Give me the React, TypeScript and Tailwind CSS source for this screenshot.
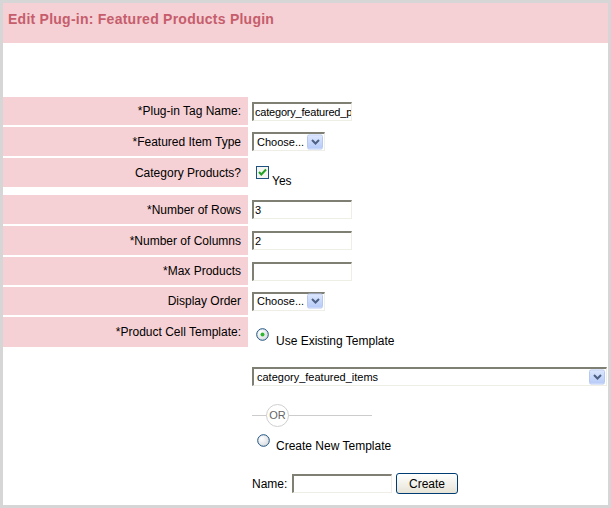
import React from 'react';

const font = { fontFamily: '"Liberation Sans", Arial, sans-serif' };

const Arrow = () => (
  <span className="pointer-events-none absolute right-[2px] top-1/2 flex h-[15px] w-[16px] -translate-y-1/2 items-center justify-center rounded-[2px] border border-[#b5c8f2] bg-gradient-to-b from-[#dce6fd] to-[#b7cbf8]">
    <svg width="9" height="7" viewBox="0 0 9 7">
      <path d="M1 1.5 L4.5 5 L8 1.5" fill="none" stroke="#4d6185" strokeWidth="2" />
    </svg>
  </span>
);

const XpSelect = ({ width, value }: { width: string; value: string }) => (
  <div className={`relative h-[19px] ${width}`}>
    <div className="flex h-full w-full items-center border border-t-2 border-l-2 border-t-[#7f7f74] border-l-[#7f7f74] border-r-[#eeeee6] border-b-[#eeeee6] bg-white pl-[3px] text-[11px] leading-[13px] text-black">
      {value}
    </div>
    <Arrow />
  </div>
);

const XpInput = ({ value = '', width = 'w-[100px]' }: { value?: string; width?: string }) => (
  <input
    type="text"
    defaultValue={value}
    className={`h-[19px] ${width} border border-t-2 border-l-2 border-t-[#7f7f74] border-l-[#7f7f74] border-r-[#eeeee6] border-b-[#eeeee6] bg-white py-0 pl-[1px] text-[11px] leading-[13px] tracking-[-0.2px] text-black outline-none`}
    style={font}
  />
);

const Radio = ({ checked }: { checked?: boolean }) => (
  <svg width="13" height="13" viewBox="0 0 13 13" className="shrink-0">
    <defs>
      <radialGradient id={checked ? 'rg1' : 'rg2'} cx="0.35" cy="0.35" r="0.7">
        <stop offset="0" stopColor="#ffffff" />
        <stop offset="1" stopColor="#d8dce0" />
      </radialGradient>
    </defs>
    <circle cx="6.5" cy="6.5" r="5.8" fill={`url(#${checked ? 'rg1' : 'rg2'})`} stroke="#1c5180" strokeWidth="1" />
    {checked && <circle cx="6.5" cy="6.5" r="2" fill="#2fb52f" />}
  </svg>
);

const Checkbox = () => (
  <svg width="13" height="13" viewBox="0 0 13 13" className="shrink-0">
    <rect x="0.5" y="0.5" width="12" height="12" fill="#f4f4f0" stroke="#1c5180" />
    <path d="M3 6 L5.3 8.5 L10 3.5" fill="none" stroke="#21a121" strokeWidth="2" />
  </svg>
);

const Label = ({ text, h }: { text: string; h: string }) => (
  <div className={`flex ${h} w-[245px] shrink-0 items-center justify-end bg-[#f5d0d4] pr-[7px] text-[12px] text-black`}>
    {text}
  </div>
);

export default function App() {
  return (
    <div className="h-[508px] w-[611px] bg-[#d6d6d6] pt-[3px] pl-[3px] pr-[3px] pb-[3px]" style={font}>
      <div className="h-[502px] w-[605px] bg-white">
        {/* Header */}
        <div className="h-[40px] bg-[#f5d0d4] pl-[5px] pt-[8px]">
          <h1 className="text-[14px] font-bold leading-[17px] tracking-[0.25px] text-[#c65d6c]">
            Edit Plug-in: Featured Products Plugin
          </h1>
        </div>

        <div className="mt-[54px] flex flex-col gap-[2px]">
          <div className="flex gap-[4px]">
            <Label text="*Plug-in Tag Name:" h="h-[28px]" />
            <div className="flex items-center">
              <XpInput value="category_featured_products" />
            </div>
          </div>
          <div className="flex gap-[4px]">
            <Label text="*Featured Item Type" h="h-[29px]" />
            <div className="flex items-center">
              <XpSelect width="w-[73px]" value="Choose..." />
            </div>
          </div>
          <div className="flex h-[35px] items-start gap-[4px]">
            <Label text="Category Products?" h="h-[29px]" />
            <div className="flex items-start pl-[4px] text-[12px]">
              <span className="mt-[8px]">
                <Checkbox />
              </span>
              <span className="ml-[3px] mt-[16px] leading-[14px]">Yes</span>
            </div>
          </div>
          <div className="flex gap-[4px]">
            <Label text="*Number of Rows" h="h-[29px]" />
            <div className="flex items-center">
              <XpInput value="3" />
            </div>
          </div>
          <div className="flex gap-[4px]">
            <Label text="*Number of Columns" h="h-[29px]" />
            <div className="flex items-center">
              <XpInput value="2" />
            </div>
          </div>
          <div className="flex gap-[4px]">
            <Label text="*Max Products" h="h-[28px]" />
            <div className="flex items-center">
              <XpInput />
            </div>
          </div>
          <div className="flex gap-[4px]">
            <Label text="Display Order" h="h-[28px]" />
            <div className="flex items-center">
              <XpSelect width="w-[73px]" value="Choose..." />
            </div>
          </div>
          <div className="flex gap-[4px]">
            <Label text="*Product Cell Template:" h="h-[30px]" />
            <div className="flex items-start pl-[4px] text-[12px]">
              <span className="mt-[11px]">
                <Radio checked />
              </span>
              <span className="ml-[7px] mt-[17px] leading-[14px]">Use Existing Template</span>
            </div>
          </div>
        </div>

        {/* Template chooser */}
        <div className="ml-[249px] text-[12px]">
          <div className="mt-[19px]">
            <XpSelect width="w-[355px]" value="category_featured_items" />
          </div>

          <div className="relative mt-[18px] flex h-[23px] w-[120px] items-center">
            <div className="h-px w-full bg-[#cccccc]" />
            <div className="absolute left-[14px] top-0 flex h-[23px] w-[23px] items-center justify-center rounded-full border border-[#cfcfcf] bg-white text-[11px] text-[#666666]">
              OR
            </div>
          </div>

          <div className="mt-[7px] flex items-start pl-[5px]">
            <Radio />
            <span className="ml-[6px] mt-[5px] leading-[14px]">Create New Template</span>
          </div>

          <div className="mt-[20px] flex items-center">
            <span className="w-[40px]">Name:</span>
            <XpInput />
            <button className="ml-[4px] h-[21px] w-[62px] rounded-[3px] border border-[#003c74] bg-gradient-to-b from-white to-[#e6e3d6] text-[12px] text-black">
              Create
            </button>
          </div>
        </div>
      </div>
    </div>
  );
}
